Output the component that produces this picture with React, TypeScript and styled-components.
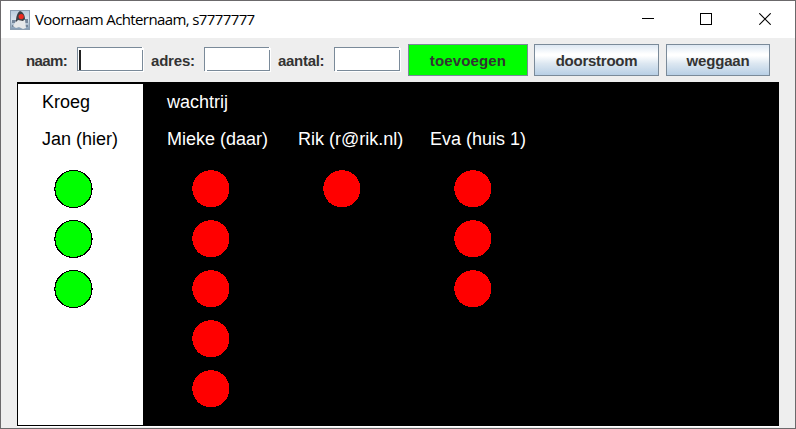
import React from 'react';
import styled, { createGlobalStyle } from 'styled-components';

const GlobalStyle = createGlobalStyle`
  * { box-sizing: border-box; }
  body { margin: 0; overflow: hidden; background: #6b696b; }
`;

const Window = styled.main`
  width: 796px;
  height: 429px;
  display: flex;
  flex-direction: column;
  border: 1px solid #6b696b;
  background: #eee;
  font-family: "Liberation Sans", Arial, sans-serif;
`;

const TitleBar = styled.header`
  height: 37px;
  flex: none;
  display: flex;
  align-items: center;
  padding-left: 9px;
  background: #fff;
`;

const Title = styled.h1`
  margin: 0 auto 2px 5px;
  font: 400 15px/20px "Open Sans", sans-serif;
  letter-spacing: -0.61px;
  color: #000;
  white-space: nowrap;
`;

const WindowControls = styled.div`
  display: flex;
  height: 36px;
  margin: 0 1px 1px 0;
`;

const ControlButton = styled.button`
  width: 58.5px;
  padding: 0;
  border: 0;
  background: none;
  display: flex;
  align-items: center;
  justify-content: center;
`;

const Toolbar = styled.form`
  flex: none;
  height: 44px;
  display: flex;
  align-items: flex-start;
  padding: 6px 0 0 25px;
`;

const FieldLabel = styled.label<{ $width: number; $tracking?: number }>`
  width: ${({ $width }) => $width}px;
  padding-top: 8px;
  display: flex;
  font-weight: 700;
  font-size: 15px;
  line-height: 18px;
  letter-spacing: ${({ $tracking = 0 }) => $tracking}px;
  color: #333;
  white-space: nowrap;
`;

const Field = styled.input<{ $caret?: boolean }>`
  width: 66px;
  height: 24px;
  margin: 3px 8px 0 0;
  padding: 1px 3px;
  border: 0;
  border-radius: 0;
  outline: 0;
  background:
    linear-gradient(#7a8a99, #7a8a99) 0 0 / 65px 1px no-repeat,
    linear-gradient(#7a8a99, #7a8a99) 0 0 / 1px 24px no-repeat,
    linear-gradient(#7a8a99, #7a8a99) 65px 3px / 1px 21px no-repeat,
    linear-gradient(#7a8a99, #7a8a99) ${({ $caret }) => ($caret ? 0 : 3)}px 23px / 66px 1px no-repeat,
    linear-gradient(#222, #222) 2px 3px / ${({ $caret }) => ($caret ? 2 : 0)}px 20px no-repeat,
    #fff;
  box-shadow: 1px 1px 0 #fff;
  font: 15px "Liberation Sans", Arial, sans-serif;
`;

const ActionButton = styled.button<{ $width: number; $gap: number; $accent?: boolean; $tracking?: number }>`
  width: ${({ $width }) => $width}px;
  height: 32px;
  margin: 0 ${({ $gap }) => $gap}px 0 0;
  padding: 2px 0 0;
  border: 1px solid #7a8a99;
  background: ${({ $accent }) =>
    $accent ? '#00ff00' : 'linear-gradient(#dde8f3 0%, #fff 30%, #fff 36%, #dce7f1 62%, #b8cfe5 100%)'};
  font: 700 15px/18px "Liberation Sans", Arial, sans-serif;
  letter-spacing: ${({ $tracking = 0 }) => $tracking}px;
  color: #333;
`;

const Board = styled.section`
  width: 762px;
  height: 344px;
  flex: none;
  margin-left: 16px;
  padding: 2px 0 1px 1px;
  display: flex;
  background: #000;
  box-shadow: 0 1px 0 #fff;
  font-size: 18px;
  line-height: 20px;
`;

const Area = styled.div<{ $inside?: boolean }>`
  width: ${({ $inside }) => ($inside ? '125px' : '636px')};
  padding: 8px 0 0 24px;
  background: ${({ $inside }) => ($inside ? '#fff' : '#000')};
  color: ${({ $inside }) => ($inside ? '#000' : '#fff')};
`;

const AreaTitle = styled.h2`
  margin: 0 0 17px;
  font-size: 18px;
  font-weight: 400;
  line-height: 20px;
`;

const Groups = styled.div`
  display: flex;
`;

const Group = styled.div<{ $width: number }>`
  width: ${({ $width }) => $width}px;
  flex: none;
`;

const GroupName = styled.div`
  white-space: nowrap;
`;

const Persons = styled.div<{ $indent: number }>`
  display: flex;
  flex-direction: column;
  gap: 11px;
  padding: 21px 0 0 ${({ $indent }) => $indent}px;
`;

const PersonDot = styled.svg`
  display: block;
  width: 39px;
  height: 39px;
`;

type Party = { name: string; count: number; width: number; indent: number };

const waiting: Party[] = [
  { name: 'Mieke (daar)', count: 5, width: 131, indent: 25 },
  { name: 'Rik (r@rik.nl)', count: 1, width: 132, indent: 25 },
  { name: 'Eva (huis 1)', count: 3, width: 130, indent: 24 },
];

function PartyColumn({ party, inside }: { party: Party; inside?: boolean }) {
  return (
    <Group $width={party.width}>
      <GroupName>{party.name}</GroupName>
      <Persons $indent={party.indent}>
        {Array.from({ length: party.count }, (_, i) => (
          <PersonDot key={i} viewBox="0 0 39 39" shapeRendering="crispEdges">
            {inside ? (
              <circle cx="19.5" cy="19" r="18.6" fill="#0f0" stroke="#000" strokeWidth="1.1" />
            ) : (
              <circle cx="18.9" cy="18.8" r="18.6" fill="red" />
            )}
          </PersonDot>
        ))}
      </Persons>
    </Group>
  );
}

function JavaIcon() {
  return (
    <svg width="20" height="20" viewBox="0 0 20 20">
      <defs>
        <linearGradient id="sky" x1="0" y1="0" x2="0" y2="1">
          <stop offset="0" stopColor="#b9cbdc" />
          <stop offset=".5" stopColor="#d9e3ec" />
          <stop offset="1" stopColor="#7f98b0" />
        </linearGradient>
      </defs>
      <rect x=".5" y=".5" width="19" height="19" fill="url(#sky)" stroke="#8c9eb0" />
      <path d="M2 10h5v3H2zM14 9h4v4h-4zM2 15h16v2H2z" fill="#75869a" />
      <path d="M6 11 3 16l3 2 3-1 4 2 3-1-1-8-3-1z" fill="#e6e8e9" />
      <path d="M10 1c3 1 5 4 5 8l-2 2-5-1-2 2c0-5 1-9 4-11z" fill="#3b4046" />
      <circle cx="11.2" cy="6.6" r="2.6" fill="#ef2b20" />
    </svg>
  );
}

export default function App() {
  return (
    <>
      <GlobalStyle />
      <Window>
        <TitleBar>
          <JavaIcon />
          <Title>Voornaam Achternaam, s7777777</Title>
          <WindowControls>
            <ControlButton aria-label="Minimize">
              <svg width="12" height="12" shapeRendering="crispEdges"><path d="M0 5.5h12" stroke="#000" /></svg>
            </ControlButton>
            <ControlButton aria-label="Maximize">
              <svg width="12" height="12" shapeRendering="crispEdges"><path d="M.5.5h11v11H.5z" fill="none" stroke="#000" /></svg>
            </ControlButton>
            <ControlButton aria-label="Close">
              <svg width="12" height="12"><path d="m.3.3 11.4 11.4M11.7.3.3 11.7" stroke="#000" strokeWidth="1.1" /></svg>
            </ControlButton>
          </WindowControls>
        </TitleBar>
        <Toolbar>
          <FieldLabel $width={51} $tracking={-0.6} htmlFor="naam">naam:</FieldLabel>
          <Field id="naam" $caret />
          <FieldLabel $width={53} $tracking={-0.2} htmlFor="adres">adres:</FieldLabel>
          <Field id="adres" />
          <FieldLabel $width={56} $tracking={-0.3} htmlFor="aantal">aantal:</FieldLabel>
          <Field id="aantal" />
          <ActionButton type="button" $width={120} $gap={6} $tracking={0.15} $accent>toevoegen</ActionButton>
          <ActionButton type="button" $width={125} $gap={7} $tracking={-0.25}>doorstroom</ActionButton>
          <ActionButton type="button" $width={104} $gap={0} $tracking={-0.2}>weggaan</ActionButton>
        </Toolbar>
        <Board>
          <Area $inside>
            <AreaTitle>Kroeg</AreaTitle>
            <PartyColumn party={{ name: 'Jan (hier)', count: 3, width: 101, indent: 12 }} inside />
          </Area>
          <Area>
            <AreaTitle>wachtrij</AreaTitle>
            <Groups>
              {waiting.map((party) => (
                <PartyColumn key={party.name} party={party} />
              ))}
            </Groups>
          </Area>
        </Board>
      </Window>
    </>
  );
}
